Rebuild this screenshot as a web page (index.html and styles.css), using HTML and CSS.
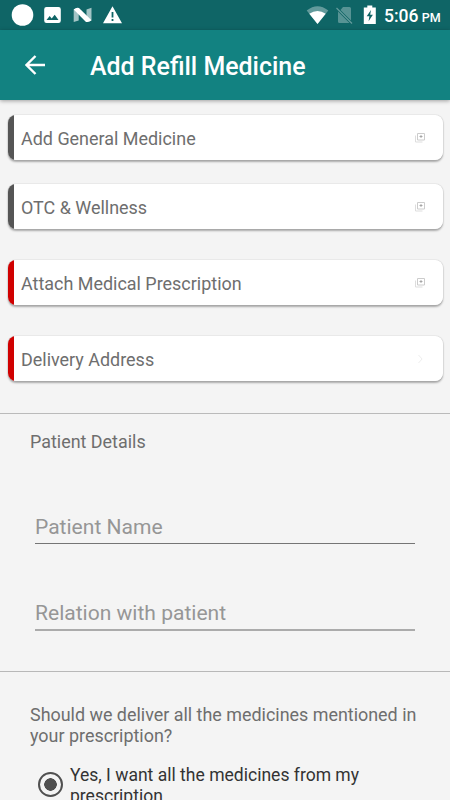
FILE: index.html
```html
<!DOCTYPE html>
<html lang="en">
<head>
<meta charset="utf-8">
<title>Add Refill Medicine</title>
<link rel="stylesheet" href="styles.css">
</head>
<body>
<div class="statusbar">
  <svg class="status-left" width="130" height="30" viewBox="0 0 130 30" fill="#fff">
    <circle cx="22.5" cy="15" r="10.8"/>
    <path fill-rule="evenodd" d="M46.500 7h12a2.300 2.300 0 0 1 2.300 2.300v11.400a2.300 2.300 0 0 1-2.300 2.300h-12a2.300 2.300 0 0 1-2.300-2.300V9.300a2.300 2.300 0 0 1 2.300-2.300zM46.500 20h12l-3.800-5.200-3 3.800-2-2.500z"/>
    <path opacity=".62" d="M73.700 9.500l5-1.500v12.500l-5 1.500zM86.500 9.500l5-1.700v12.500l-5 1.700z"/>
    <path d="M73.700 9.500Q76 7.300 79 8l12.500 12.300q-2.300 2.300-5.500 1.600z"/>
    <path fill-rule="evenodd" d="M112.500 6.300l9.500 17h-19zM111.600 12v5.500h1.800V12zm0 7v1.900h1.800V19z"/>
  </svg>
  <div class="status-right">
    <svg width="74" height="30" viewBox="306 0 74 30" fill="#fff">
      <path opacity=".35" d="M306.700 10.500Q317.500 2 328.300 10.500L317.500 24z"/>
      <path d="M309.300 13.700Q317.500 8.500 325.700 13.700L317.500 24z"/>
      <path opacity=".3" d="M343 7h6.500a1.500 1.500 0 0 1 1.500 1.500v12L340.500 10zM338 11.500l11.500 11.500h-10a1.500 1.500 0 0 1-1.500-1.500z"/>
      <path d="M336.500 8l15.500 15.500" stroke="#fff" stroke-width="1.300" opacity=".35"/>
      <path fill-rule="evenodd" d="M367.300 5.500h5V7.500h3.500V24h-12V7.500h3.500zM371 10l-4.300 6.300h2.700l-.8 5 4.300-6.500h-2.700z"/>
    </svg>
    <span class="clock">5:06 <small>PM</small></span>
  </div>
</div>
<header class="toolbar">
  <svg width="20" height="20" viewBox="0 0 20 20" fill="none" stroke="#fff" stroke-width="2.400"><path d="M20 10H2M10.500 1L1.500 10l9 9"/></svg>
  <h1>Add Refill Medicine</h1>
</header>
<main>
  <section class="cards">
    <div class="card"><span>Add General Medicine</span><svg class="add" width="10" height="10" viewBox="0 0 10 10"><path d="M.5 2.500v6.500h7" stroke="#ddd"/><path d="M2.500.5h7v6.500h-7z" stroke="#ccc"/><path d="M4.500 3.500h3M6 2v3" stroke="#999" stroke-width=".8"/></svg></div>
    <div class="card"><span>OTC &amp; Wellness</span><svg class="add" width="10" height="10" viewBox="0 0 10 10"><path d="M.5 2.500v6.500h7" stroke="#ddd"/><path d="M2.500.5h7v6.500h-7z" stroke="#ccc"/><path d="M4.500 3.500h3M6 2v3" stroke="#999" stroke-width=".8"/></svg></div>
    <div class="card required"><span>Attach Medical Prescription</span><svg class="add" width="10" height="10" viewBox="0 0 10 10"><path d="M.5 2.500v6.500h7" stroke="#ddd"/><path d="M2.500.5h7v6.500h-7z" stroke="#ccc"/><path d="M4.500 3.500h3M6 2v3" stroke="#999" stroke-width=".8"/></svg></div>
    <div class="card required"><span>Delivery Address</span><svg class="add" width="10" height="10" viewBox="0 0 10 10"><path d="M3.500 1l3.500 4-3.500 4" stroke="#eee"/></svg></div>
  </section>
  <section class="patient">
    <h2>Patient Details</h2>
    <div class="field">Patient Name</div>
    <div class="field relation">Relation with patient</div>
  </section>
  <section class="delivery">
    <p>Should we deliver all the medicines mentioned in<br>your prescription?</p>
    <div class="option">
      <span class="radio"></span>
      <span>Yes, I want all the medicines from my<br>prescription</span>
    </div>
  </section>
</main>
</body>
</html>
```
FILE: styles.css
```css
* { box-sizing: border-box; }
body {
  margin: 0;
  height: 800px;
  overflow: hidden;
  background: #f4f4f4;
  color: #6e6e6e;
  font-family: Roboto, "Liberation Sans", sans-serif;
  font-size: 17.92px;
}
svg { display: block; }
.statusbar {
  height: 30px;
  display: flex;
  justify-content: space-between;
  background: #0f6566;
  color: #fff;
}
.status-right { display: flex; width: 144px; }
.clock {
  margin-left: 4px;
  font-size: 17.5px;
  line-height: 32px;
  font-weight: 500;
  white-space: nowrap;
}
.clock small { font-size: 12.5px; margin-left: -1px; }
.toolbar {
  height: 70px;
  padding-left: 25px;
  display: flex;
  align-items: center;
  background: #128281;
  color: #fff;
  box-shadow: 0 1px 4px rgba(0, 0, 0, .35);
}
h1 {
  margin: 3px 0 0 45px;
  font-size: 24.95px;
  line-height: 30px;
  font-weight: 500;
}
.cards {
  height: 314px;
  padding: 15px 7.5px 0 7.5px;
  border-bottom: 1px solid #bababa;
}
.card {
  height: 45px;
  margin-bottom: 31px;
  padding: 0 18px 0 13.5px;
  display: flex;
  align-items: center;
  justify-content: space-between;
  border-radius: 8px;
  background: linear-gradient(to right, #555 6.500px, #fff 6.500px);
  box-shadow: 0 0 1px rgba(0, 0, 0, .3), 0 1.500px 2px rgba(0, 0, 0, .3);
}
.card:first-child { margin-bottom: 24px; }
.card.required { background: linear-gradient(to right, #d00000 6.500px, #fff 6.500px); }
.card span { padding-top: 2px; font-size: 17.95px; }
.add { fill: none; }
.patient {
  height: 258px;
  padding: 17px 35px 0;
  border-bottom: 1px solid #b8b8b8;
}
h2 {
  margin: 0 0 0 -5px;
  font-size: 17.92px;
  line-height: 21px;
  font-weight: 400;
}
.field {
  height: 33px;
  margin-top: 59px;
  font-size: 21.05px;
  line-height: 31px;
  color: #969696;
  border-bottom: 1px solid #757575;
}
.relation {
  height: 34px;
  margin-top: 53px;
  border-bottom: 2px solid #ababab;
}
.delivery { padding: 32px 30px 0; }
.delivery p { margin: 0; line-height: 21px; }
.option {
  margin-top: 19px;
  padding-left: 7.5px;
  display: flex;
  line-height: 21px;
  font-size: 17.55px;
  color: #333;
}
.radio {
  width: 25px;
  height: 25px;
  margin: 7px 7.5px 0 0;
  border: 2.500px solid #505050;
  border-radius: 50%;
  background: radial-gradient(circle, #505050 6px, transparent 6.500px);
}
```
